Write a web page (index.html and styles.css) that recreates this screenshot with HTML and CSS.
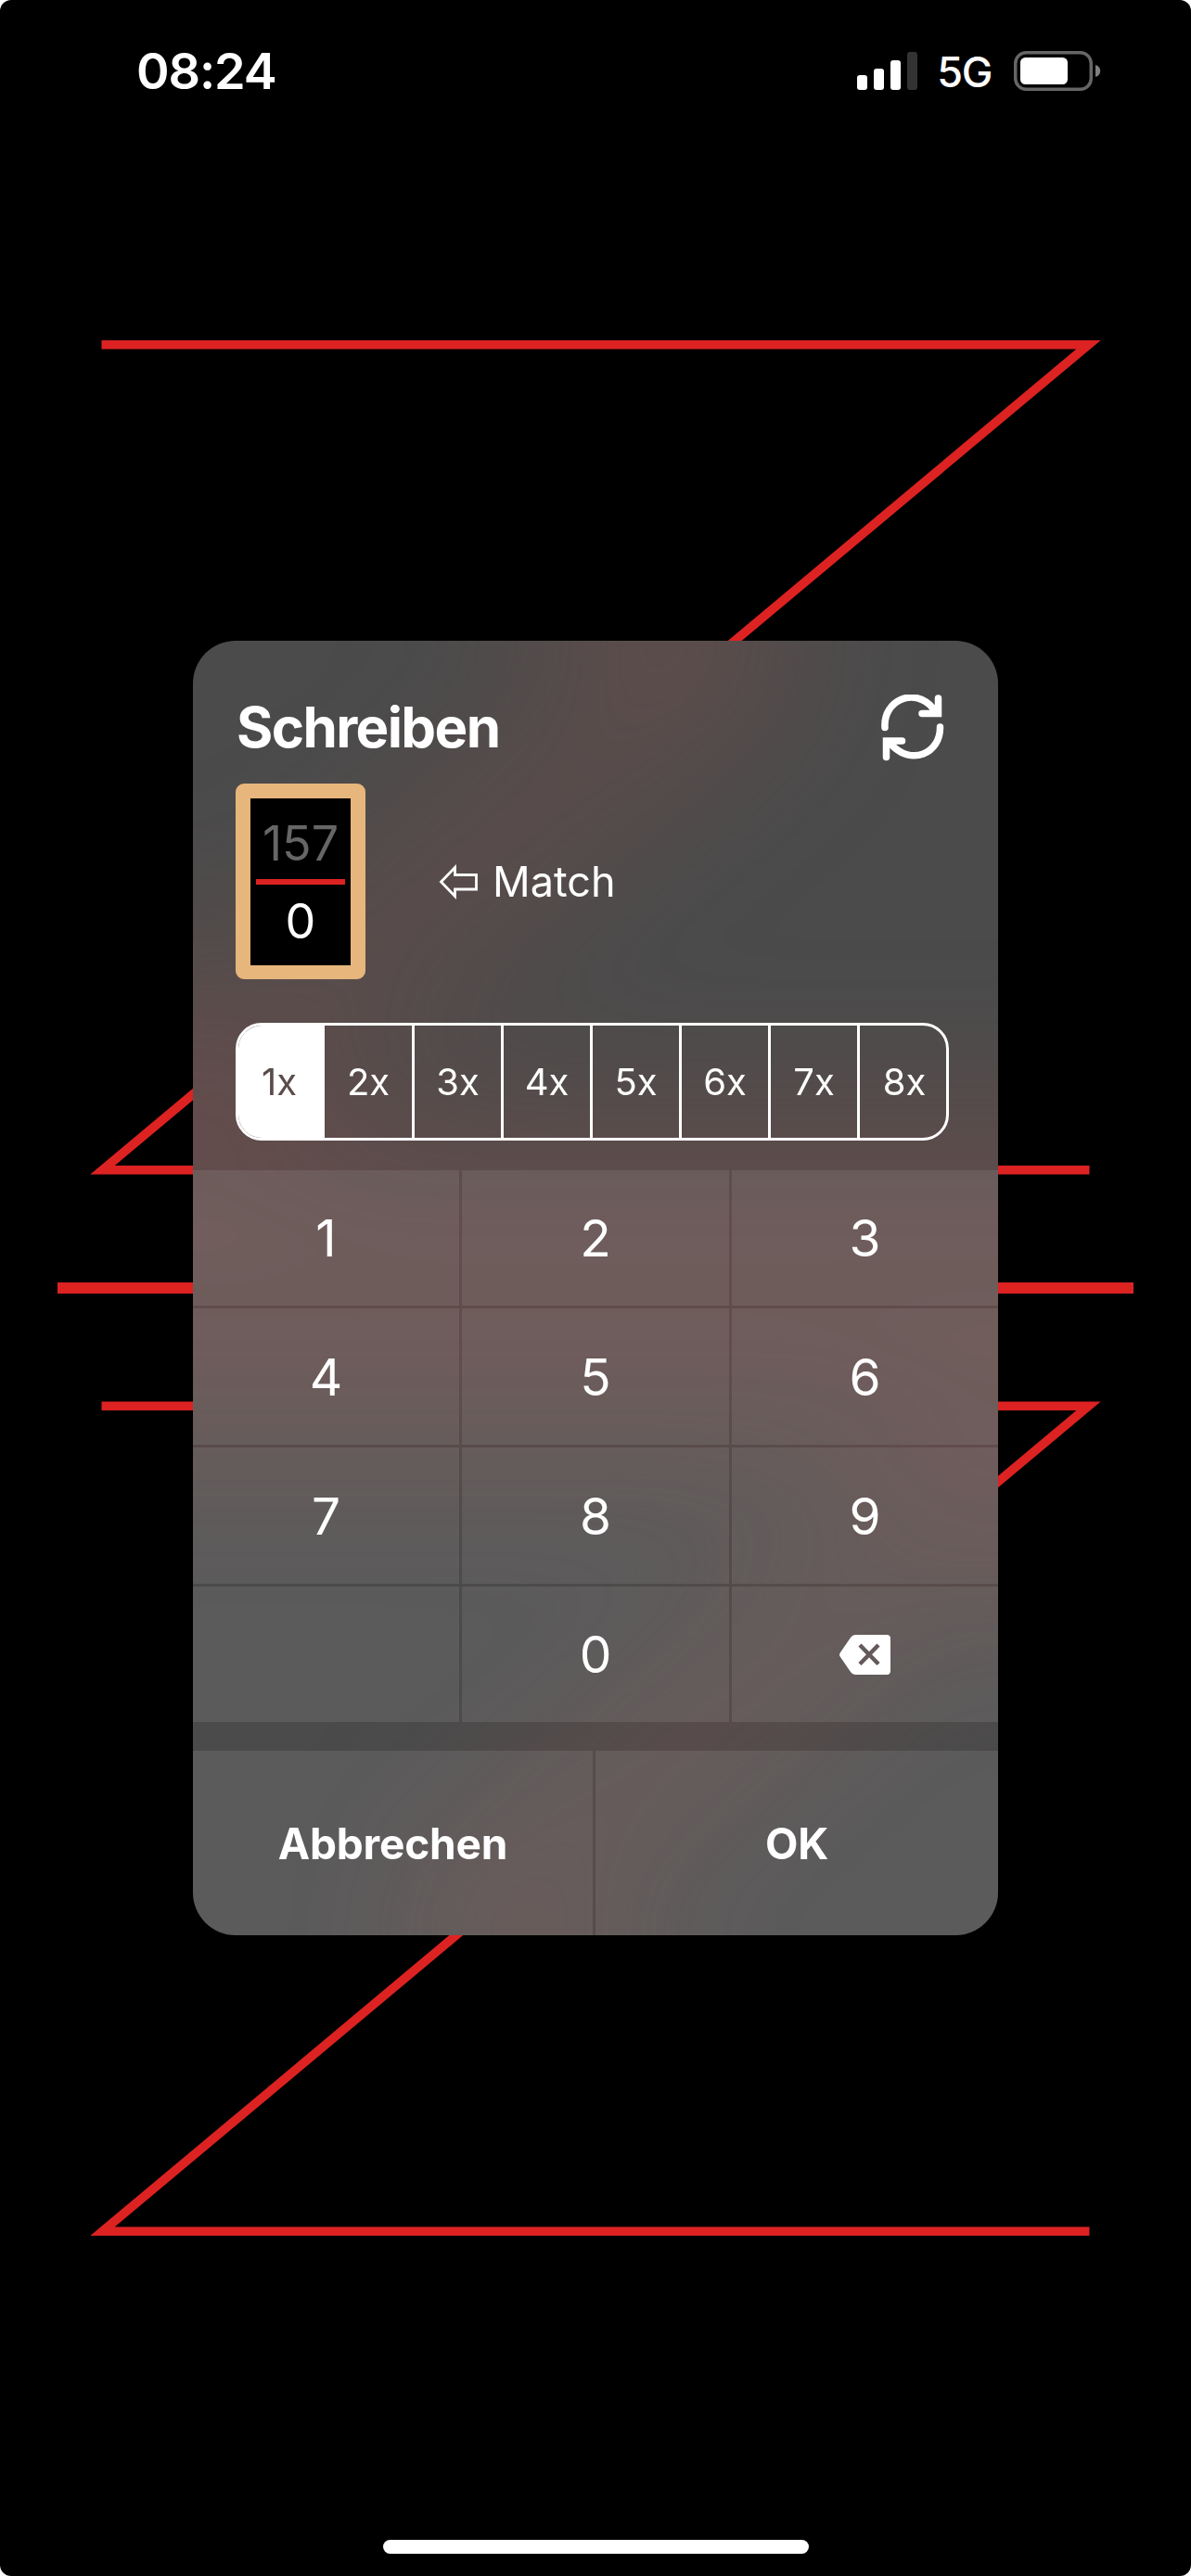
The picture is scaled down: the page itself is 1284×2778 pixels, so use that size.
FILE: index.html
```html
<!DOCTYPE html>
<html lang="de">
<head>
<meta charset="utf-8">
<title>Schreiben</title>
<link rel="stylesheet" href="styles.css">
</head>
<body>
<main class="screen">
  <svg class="board" viewBox="0 0 1284 2778" aria-hidden="true">
    <g fill="none" stroke="#dd2222" stroke-width="9.6">
      <path d="M109.500 371.700H1173.500L110.500 1261.700H1174.500"/>
      <path d="M109.500 1516.300H1173.500L110.500 2406.300H1174.500"/>
      <path d="M62 1389H1222" stroke-width="12"/>
    </g>
  </svg>
  <header class="status">
    <span class="time">08:24</span>
    <div class="status-right">
      <svg class="signal" viewBox="0 0 65 41"><rect y="25" width="11" height="16" rx="3"/><rect x="18" y="18" width="11" height="23" rx="3"/><rect x="36" y="9" width="11" height="32" rx="3"/><rect x="54" width="11" height="41" rx="3" fill="#333"/></svg>
      <span class="network">5G</span>
      <svg class="battery" viewBox="0 0 94 43"><rect x="1.750" y="1.750" width="81.500" height="39.500" rx="11.500" fill="none" stroke="#666" stroke-width="3.500"/><rect x="7" y="7" width="51" height="29" rx="5.500"/><path d="M88 15c7 2 7 11 0 13z" fill="#808080"/></svg>
    </div>
  </header>

  <section class="dialog">
    <!-- frosted glow of the board lines, reflected at the panel edges -->
    <svg class="frost" viewBox="208 691 868 1396" aria-hidden="true">
      <defs>
        <filter id="blur" filterUnits="userSpaceOnUse" x="-200" y="300" width="1700" height="2200" color-interpolation-filters="sRGB"><feGaussianBlur stdDeviation="94"/></filter>
        <clipPath id="panel"><rect x="208" y="691" width="868" height="1396"/></clipPath>
        <g id="lines" clip-path="url(#panel)" fill="none" stroke="#8f514e" stroke-width="42">
          <path d="M1173.500 371.700L110.500 1261.700H1174.500"/>
          <path d="M109.500 1516.300H1173.500L110.500 2406.300"/>
          <path d="M62 1389H1222" stroke-width="48"/>
        </g>
        <g id="column">
          <use href="#lines"/>
          <use href="#lines" transform="matrix(1 0 0 -1 0 1382)"/>
          <use href="#lines" transform="matrix(1 0 0 -1 0 4174)"/>
        </g>
      </defs>
      <g filter="url(#blur)">
        <use href="#column"/>
        <use href="#column" transform="matrix(-1 0 0 1 416 0)"/>
        <use href="#column" transform="matrix(-1 0 0 1 2152 0)"/>
      </g>
    </svg>
    <div class="top">
      <div class="title-row">
        <h1>Schreiben</h1>
        <svg class="refresh" viewBox="0 0 68 72" fill="none" stroke="#fff" stroke-width="7.500" stroke-linecap="round"><path d="M4 35.500C2 6 36-9 56 15M44 20.500H61.500V4M63.500 35C64 64 32 77 11 54M22.500 50H5.500V67.500"/></svg>
      </div>
      <div class="score-row">
        <div class="slate">
          <span class="old">157</span>
          <span class="rule"></span>
          <span class="new">0</span>
        </div>
        <div class="match">
          <svg class="arrow" viewBox="0 0 44 38"><path d="M2.500 19L17.500 3.500V11.500H40.500V27H17.500V34.500Z" fill="none" stroke="#fff" stroke-width="2.800"/></svg>
          <span>Match</span>
        </div>
      </div>
      <div class="factors">
        <span class="on">1x</span><span>2x</span><span>3x</span><span>4x</span><span>5x</span><span>6x</span><span>7x</span><span>8x</span>
      </div>
    </div>
    <div class="keys">
      <span>1</span><span>2</span><span>3</span>
      <span>4</span><span>5</span><span>6</span>
      <span>7</span><span>8</span><span>9</span>
      <span></span><span>0</span>
      <span><svg class="delete" viewBox="0 0 55 43"><path d="M17 0H51Q55 0 55 4V39Q55 43 51 43H17Q14 43 12 40L1 24Q-1 21.500 1 19L12 3Q14 0 17 0Z" fill="#fff"/><path d="M22 11L42 31.500M42 11L22 31.500" stroke="#645a5a" stroke-width="4.500"/></svg></span>
    </div>
    <div class="actions"><span>Abbrechen</span><span>OK</span></div>
  </section>
  <div class="home"></div>
</main>
</body>
</html>
```
FILE: styles.css
```css
* { box-sizing: border-box; }
body {
  margin: 0;
  background: #fff;
  color: #fff;
  font-family: Inter, "Liberation Sans", sans-serif;
}
.screen {
  position: relative;
  width: 1284px;
  height: 2778px;
  display: flex;
  flex-direction: column;
  align-items: center;
  background: #000;
  border-radius: 12px;
  overflow: hidden;
}
.board { position: absolute; inset: 0; width: 1284px; height: 2778px; }
.status {
  position: relative;
  width: 100%;
  height: 152px;
  padding: 0 97px 0 147px;
  display: flex;
  justify-content: space-between;
  align-items: center;
}
.time { font-size: 54px; font-weight: 600; letter-spacing: -1.1px; }
.status-right { display: flex; align-items: center; }
.signal { width: 65px; height: 41px; fill: #fff; }
.network { font-size: 45px; font-weight: 500; margin: 3px 24px 0 21px; letter-spacing: -1.4px; }
.battery { width: 94px; height: 43px; fill: #fff; }

.dialog {
  position: relative;
  width: 868px;
  height: 1396px;
  margin-top: 539px;
  border-radius: 46px;
  overflow: hidden;
  display: flex;
  flex-direction: column;
  background: #4b4b4b;
}
.frost { position: absolute; inset: 0; width: 868px; height: 1396px; }
.top, .keys, .actions { position: relative; }
.top { height: 571px; padding: 0 46px; }
.title-row {
  display: flex;
  justify-content: space-between;
  align-items: center;
  height: 154px;
  padding: 32px 12px 0 1px;
}
h1 { margin: 0; font-size: 60px; font-weight: 700; letter-spacing: -1.6px; }
.refresh { width: 68px; height: 72px; margin-top: 2px; }
.score-row { display: flex; align-items: center; height: 211px; }
.slate {
  width: 140px;
  height: 211px;
  border: 16px solid #e7b67c;
  border-bottom-width: 15px;
  border-radius: 9px;
  background: linear-gradient(#000, #000) padding-box, #e7b67c;
  display: flex;
  flex-direction: column;
  align-items: center;
  padding-top: 15px;
  font-size: 52px;
  line-height: 68px;
}
.old { color: #666; }
.rule { width: 96px; height: 6px; margin-top: 4px; background: #dd2222; }
.new { margin-top: 6px; }
.match { display: flex; align-items: center; margin-left: 79px; font-size: 45px; }
.arrow { width: 44px; height: 38px; margin-right: 14px; }
.factors {
  display: grid;
  grid-template-columns: 93px 94px repeat(5, 96px) 1fr;
  width: 769px;
  height: 127px;
  margin-top: 47px;
  border: 3px solid #fff;
  border-radius: 28px;
  overflow: hidden;
}
.factors span {
  display: flex;
  align-items: center;
  justify-content: center;
  border-left: 3px solid #fff;
  font-size: 40px;
}
.factors .on { background: #fff; color: #5b4c4b; border: 0; padding-right: 5px; }
.factors .on + span { border: 0; }
.factors span:last-child { padding-left: 3px; }
.keys {
  display: grid;
  grid-template-columns: 287px 288px 287px;
  grid-template-rows: 146px 147px 147px 146px;
  gap: 3px;
  height: 595px;
}
.keys span, .actions span {
  display: flex;
  align-items: center;
  justify-content: center;
  background: rgba(170, 170, 170, .17);
}
.keys span { font-size: 55px; }
.delete { width: 55px; height: 43px; }
.actions {
  display: grid;
  grid-template-columns: 431px 434px;
  column-gap: 3px;
  height: 199px;
  margin-top: 31px;
}
.actions span { font-size: 46px; font-weight: 700; letter-spacing: -.2px; }
.home {
  position: relative;
  width: 459px;
  height: 15px;
  border-radius: 8px;
  background: #fff;
  margin-top: 652px;
}
```
